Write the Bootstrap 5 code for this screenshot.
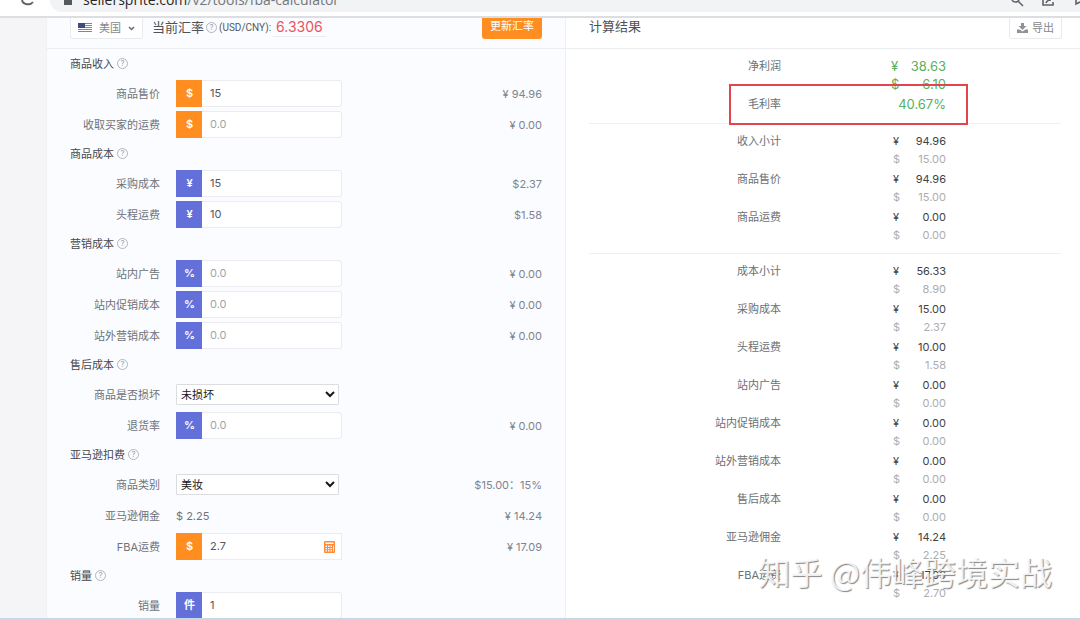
<!DOCTYPE html>
<html lang="zh-CN">
<head>
<meta charset="utf-8">
<meta name="viewport" content="width=device-width, initial-scale=1">
<title>FBA 利润计算器</title>
<link href="https://cdn.jsdelivr.net/npm/bootstrap@5.3.0/dist/css/bootstrap.min.css" rel="stylesheet">
<style>
  body { font-family: Inter, "Noto Sans CJK SC", sans-serif; font-size: 11px; line-height: 18px; color: #6f7277; background: #fff; }
  .browser-bar { height: 18px; border-bottom: 2px solid #dcdee1; }
  .omnibox { height: 12px; margin-left: 50px; background: #f1f3f4; border-radius: 0 0 0 12px; overflow: hidden; color: #74777b; }
  .reload { left: 20px; top: 0; }
  .site-icon { margin: 0 10px 0 14px; }
  .url { font: 14px/20px "Open Sans", sans-serif; margin-top: -10px; }
  .url b { font-weight: 400; color: #26282b; }
  .work { display: grid; grid-template-columns: 46px minmax(0, 520fr) minmax(0, 514fr); }
  .side { background: #f5f5f7; }
  .panel-in { background: #fbfcff; border-left: 1px solid #f1f1f5; border-right: 1px solid #eeeff3; }
  .panel-head { height: 31px; border-bottom: 1px solid #ecedf1; padding: 0 18px 0 23px; }
  .panel-in .panel-head { padding: 0 23px; }
  .head-text { font-size: 13px; line-height: 17px; color: #505256; }
  .tab-btn { height: 21px; border: 1px solid #e9eaee; border-top: 0; border-radius: 0 0 3px 3px; background: #fff; color: #85888d; padding: 0 7px; line-height: 16px; }
  .site-btn { gap: 7px; }
  .rate-btn { height: 21px; width: 60px; border: 0; border-radius: 0 0 3px 3px; background: #ff8d1f; color: #fff; line-height: 16px; padding: 0 0 5px; }
  .rate-unit { font-family: Roboto, sans-serif; font-size: 10px; color: #55585c; }
  .rate-row { margin-left: 9px; gap: 2px; }
  .rate { font-size: 14px; color: #ea545d; border-bottom: 1px solid #ececf0; padding: 0 3px; }
  .q { width: 11px; height: 11px; border: 1px solid #b3b5ba; border-radius: 50%; color: #a0a3a8; font-size: 8px; line-height: 9px; text-align: center; flex: none; }
  .form-body { padding: 1px 23px 0; }
  .sec { height: 28px; padding-bottom: 1px; gap: 3px; font-size: 11px; line-height: 26px; color: #46484c; margin: 0; font-weight: 400; }
  .line { display: grid; grid-template-columns: 90px 166px 1fr; column-gap: 16px; height: 31px; align-items: center; }
  .line > label, .line > .lbl { text-align: right; white-space: nowrap; }
  .line > output { text-align: right; color: #80848b; }
  .input-group { height: 27px; flex-wrap: nowrap; }
  .input-group-text { width: 27px; border: 0; border-radius: 0; padding: 0; justify-content: center; color: #fff; font-size: 11px; font-weight: 600; }
  .usd { background: #ff8d1f; }
  .cny { background: #6370da; }
  .form-control { font-size: 11px; padding: 0 8px; color: #55585d; border-color: #ececf0; border-left: 0; border-radius: 0 3px 3px 0; min-height: 0; }
  .form-control::placeholder { color: #a2a4a9; }
  .pick { width: 163px; height: 21px; border: 1px solid #dcdde1; background: #fff; color: #17181a; padding: 0; font-size: 11px; border-radius: 1px; }
  .calc { right: 7px; top: 8px; z-index: 6; }
  .result { padding: 0 19px 0 23px; }
  .sum { display: grid; grid-template-columns: 192fr 165fr 115fr; height: 38px; }
  .sum dt { font-weight: 400; text-align: right; line-height: 18px; color: #6c6f74; }
  .sum dd { margin: 0; padding-left: 112px; color: #404246; }
  .sum dd div { display: flex; justify-content: space-between; line-height: 18px; white-space: nowrap; }
  .sum dd div + div { color: #abadb1; }
  .sum.profit dd, .sum.profit dd div + div { color: #58b05c; font-size: 13px; }
  .sum.profit dd { padding-left: 110px; }
  .sum.margin { height: 28px; }
  .group { border-bottom: 1px solid #eeeff1; }
  .g1 { padding-top: 8px; height: 75px; }
  .g2 { padding-top: 8px; height: 130px; }
  .g3 { padding-top: 8px; }
  .highlight { left: 163px; right: 112px; top: 35px; height: 41px; border: 2px solid #e2454e; }
  .watermark { right: 28px; bottom: 26px; font-size: 32px; line-height: 48px; color: rgba(255,255,255,.85); text-shadow: 1px 1px 1px #85878a; white-space: nowrap; font-family: "Noto Sans CJK SC", sans-serif; }
  .foot { height: 1px; background: #c8d9e6; }
</style>
</head>
<body>
<div class="vh-100 d-flex flex-column overflow-hidden">
  <header class="browser-bar flex-shrink-0 position-relative">
    <svg class="reload position-absolute" width="16" height="7" viewBox="0 0 16 7" fill="none" stroke="#606368" stroke-width="2"><path d="M2 0a6 5 0 0 0 11 2"/></svg>
    <div class="omnibox d-flex justify-content-between">
      <div class="d-flex">
        <svg class="site-icon" width="9" height="6" viewBox="0 0 9 6"><path fill="#55585c" d="M0 0h8v5H0z"/></svg>
        <div class="url"><b>sellersprite.com</b>/v2/tools/fba-calculator</div>
      </div>
      <svg width="72" height="8" viewBox="0 0 72 8" fill="none" stroke="#606368" stroke-width="1.6"><path d="M4 0a4 4 0 0 0 7 0M10 1l5 5M35 0v5h10V2M38 3q1-3 5-3M68 0v4l4-2"/></svg>
    </div>
  </header>

  <main class="work flex-grow-1 overflow-hidden">
    <aside class="side"></aside>

    <section class="panel-in">
      <div class="panel-head d-flex align-items-start justify-content-between">
        <div class="d-flex align-items-start">
          <button type="button" class="tab-btn site-btn d-flex align-items-center">
            <svg width="14" height="10" viewBox="0 0 14 10"><path fill="#fff" d="M0 0h14v10H0z"/><path stroke="#d9616b" d="M0 .5h14M0 2.5h14M0 4.5h14M0 6.5h14M0 8.5h14"/><path fill="#3c4a86" d="M0 0h7v5H0z"/></svg>
            <span>美国</span>
            <svg width="7" height="5" viewBox="0 0 7 5" fill="none" stroke="#66696e" stroke-width="1.5"><path d="M1 1l2.500 2.500L6 1"/></svg>
          </button>
          <div class="rate-row d-flex align-items-center">
            <span class="head-text">当前汇率</span><span class="q">?</span><span class="rate-unit">(USD/CNY):</span><span class="rate">6.3306</span>
          </div>
        </div>
        <button type="button" class="rate-btn">更新汇率</button>
      </div>

      <form class="form-body">
        <h2 class="sec d-flex align-items-center">商品收入<span class="q">?</span></h2>
        <div class="line"><label for="price">商品售价</label><div class="input-group"><span class="input-group-text usd">$</span><input id="price" class="form-control" value="15"></div><output>¥ 94.96</output></div>
        <div class="line"><label for="ship">收取买家的运费</label><div class="input-group"><span class="input-group-text usd">$</span><input id="ship" class="form-control" placeholder="0.0"></div><output>¥ 0.00</output></div>

        <h2 class="sec d-flex align-items-center">商品成本<span class="q">?</span></h2>
        <div class="line"><label for="buy">采购成本</label><div class="input-group"><span class="input-group-text cny">¥</span><input id="buy" class="form-control" value="15"></div><output>$2.37</output></div>
        <div class="line"><label for="first">头程运费</label><div class="input-group"><span class="input-group-text cny">¥</span><input id="first" class="form-control" value="10"></div><output>$1.58</output></div>

        <h2 class="sec d-flex align-items-center">营销成本<span class="q">?</span></h2>
        <div class="line"><label for="ads">站内广告</label><div class="input-group"><span class="input-group-text cny">%</span><input id="ads" class="form-control" placeholder="0.0"></div><output>¥ 0.00</output></div>
        <div class="line"><label for="promo">站内促销成本</label><div class="input-group"><span class="input-group-text cny">%</span><input id="promo" class="form-control" placeholder="0.0"></div><output>¥ 0.00</output></div>
        <div class="line"><label for="offsite">站外营销成本</label><div class="input-group"><span class="input-group-text cny">%</span><input id="offsite" class="form-control" placeholder="0.0"></div><output>¥ 0.00</output></div>

        <h2 class="sec d-flex align-items-center">售后成本<span class="q">?</span></h2>
        <div class="line"><label for="damage">商品是否损坏</label><select id="damage" class="pick"><option>未损坏</option><option>损坏</option></select></div>
        <div class="line"><label for="refund">退货率</label><div class="input-group"><span class="input-group-text cny">%</span><input id="refund" class="form-control" placeholder="0.0"></div><output>¥ 0.00</output></div>

        <h2 class="sec d-flex align-items-center">亚马逊扣费<span class="q">?</span></h2>
        <div class="line"><label for="category">商品类别</label><select id="category" class="pick"><option>美妆</option></select><output>$15.00：15%</output></div>
        <div class="line"><span class="lbl">亚马逊佣金</span><span>$ 2.25</span><output>¥ 14.24</output></div>
        <div class="line"><label for="fba">FBA运费</label><div class="input-group position-relative"><span class="input-group-text usd">$</span><input id="fba" class="form-control" value="2.7">
          <svg class="calc position-absolute" width="11" height="12" viewBox="0 0 11 12"><rect width="11" height="12" rx="1" fill="#ff8a3a"/><path fill="#fff" d="M1.500 1.500h8V3h-8zM1.500 4.500h1.500V6H1.500zM4 4.500h1.500V6H4zM6.500 4.500H8V6H6.500zM1.500 7h1.500v1.300H1.500zM4 7h1.500v1.300H4zM6.500 7H8v1.300H6.500zM1.500 9.300h1.500v1.300H1.500zM4 9.300h1.500v1.300H4zM6.500 9.300H8v1.300H6.500zM9 4.500h.8v6H9z"/></svg></div><output>¥ 17.09</output></div>

        <h2 class="sec d-flex align-items-center">销量<span class="q">?</span></h2>
        <div class="line"><label for="qty">销量</label><div class="input-group"><span class="input-group-text cny">件</span><input id="qty" class="form-control" value="1"></div></div>
      </form>
    </section>

    <section class="position-relative overflow-hidden">
      <div class="panel-head d-flex align-items-start justify-content-between">
        <span class="head-text">计算结果</span>
        <button type="button" class="tab-btn d-flex align-items-center gap-1">
          <svg width="11" height="10" viewBox="0 0 11 10" fill="#8f9296"><path d="M4 0h3v3h2.500l-4 4-4-4H4z"/><path d="M0 6.500h2.500l3 2 3-2H11V10H0z"/></svg>导出
        </button>
      </div>
      <div class="result position-relative">
        <dl class="group g1 m-0">
          <div class="sum profit"><dt>净利润</dt><dd><div><span>¥</span><span>38.63</span></div><div><span>$</span><span>6.10</span></div></dd></div>
          <div class="sum profit margin"><dt>毛利率</dt><dd><div class="justify-content-end">40.67%</div></dd></div>
        </dl>
        <dl class="group g2 m-0">
          <div class="sum"><dt>收入小计</dt><dd><div><span>¥</span><span>94.96</span></div><div><span>$</span><span>15.00</span></div></dd></div>
          <div class="sum"><dt>商品售价</dt><dd><div><span>¥</span><span>94.96</span></div><div><span>$</span><span>15.00</span></div></dd></div>
          <div class="sum"><dt>商品运费</dt><dd><div><span>¥</span><span>0.00</span></div><div><span>$</span><span>0.00</span></div></dd></div>
        </dl>
        <dl class="g3 m-0">
          <div class="sum"><dt>成本小计</dt><dd><div><span>¥</span><span>56.33</span></div><div><span>$</span><span>8.90</span></div></dd></div>
          <div class="sum"><dt>采购成本</dt><dd><div><span>¥</span><span>15.00</span></div><div><span>$</span><span>2.37</span></div></dd></div>
          <div class="sum"><dt>头程运费</dt><dd><div><span>¥</span><span>10.00</span></div><div><span>$</span><span>1.58</span></div></dd></div>
          <div class="sum"><dt>站内广告</dt><dd><div><span>¥</span><span>0.00</span></div><div><span>$</span><span>0.00</span></div></dd></div>
          <div class="sum"><dt>站内促销成本</dt><dd><div><span>¥</span><span>0.00</span></div><div><span>$</span><span>0.00</span></div></dd></div>
          <div class="sum"><dt>站外营销成本</dt><dd><div><span>¥</span><span>0.00</span></div><div><span>$</span><span>0.00</span></div></dd></div>
          <div class="sum"><dt>售后成本</dt><dd><div><span>¥</span><span>0.00</span></div><div><span>$</span><span>0.00</span></div></dd></div>
          <div class="sum"><dt>亚马逊佣金</dt><dd><div><span>¥</span><span>14.24</span></div><div><span>$</span><span>2.25</span></div></dd></div>
          <div class="sum"><dt>FBA运费</dt><dd><div><span>¥</span><span>17.09</span></div><div><span>$</span><span>2.70</span></div></dd></div>
        </dl>
        <div class="highlight position-absolute"></div>
      </div>
      <div class="watermark position-absolute">知乎 @伟峰跨境实战</div>
    </section>
  </main>
  <div class="foot flex-shrink-0"></div>
</div>
<script src="https://cdn.jsdelivr.net/npm/bootstrap@5.3.0/dist/js/bootstrap.bundle.min.js"></script>
</body>
</html>
